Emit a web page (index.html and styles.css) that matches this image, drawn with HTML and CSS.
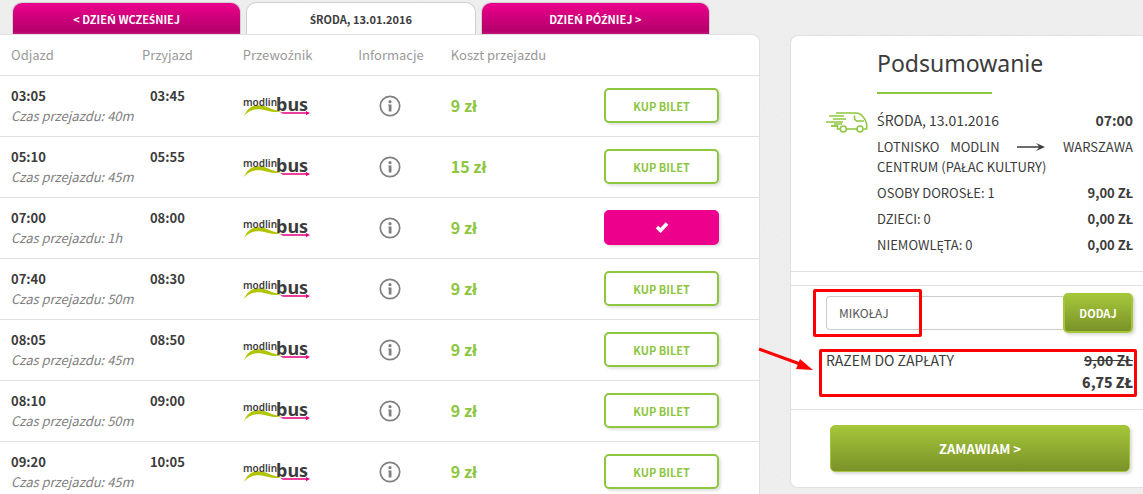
FILE: index.html
```html
<!doctype html>
<html lang="pl">
<head>
<meta charset="utf-8">
<title>ModlinBus - wybór kursu</title>
<link rel="stylesheet" href="styles.css">
</head>
<body>
<svg class="sprite" aria-hidden="true">
	<symbol id="logo" viewBox="0 0 68 24">
		<path d="M1 22C5 13 10 10.500 18 11.500C26 12.500 30 17 39 17C31 19.500 25 16.500 19 15.500C12 14.500 6 16 1 22Z" fill="#b0c400"/>
		<text x="0" y="12" class="logo-modlin">modlin</text>
		<text x="33" y="17" class="logo-bus">bus</text>
		<path d="M37 18.300H63V17L67 19L63 21.300V19.800H40Z" fill="#e5007d"/>
	</symbol>
	<symbol id="info" viewBox="0 0 22 22">
		<circle cx="11" cy="11" r="9.700" fill="none" stroke="#808080" stroke-width="1.700"/>
		<circle cx="11" cy="6.700" r="1.600" fill="#808080"/>
		<path d="M9.200 9.500H12.500V16.500H9.700V10.500H9.200Z" fill="#808080"/>
	</symbol>
</svg>
<div class="page">
	<div class="courses">
		<div class="tabs">
			<a href="#" class="tab">&lt; Dzie<span class="pl">ń</span> wcze<span class="pl">ś</span>niej</a>
			<a href="#" class="tab active"><span class="pl">Ś</span>roda, 13.01.2016</a>
			<a href="#" class="tab">Dzie<span class="pl">ń</span> pó<span class="pl">ź</span>niej &gt;</a>
		</div>
		<div class="sheet">
			<table class="list">
				<thead>
					<tr>
						<th class="from">Odjazd</th>
						<th class="to">Przyjazd</th>
						<th class="carrier">Przewo<span class="pl">ź</span>nik</th>
						<th class="info">Informacje</th>
						<th class="price">Koszt przejazdu</th>
						<th class="buy"></th>
					</tr>
				</thead>
				<tbody>
					<tr>
						<td class="from"><b>03:05</b><i>Czas przejazdu: 40m</i></td>
						<td class="to"><b>03:45</b></td>
						<td class="carrier"><svg class="logo" role="img" aria-label="modlinbus"><use href="#logo"/></svg></td>
						<td class="info"><svg class="info-icon" role="img" aria-label="Informacje"><use href="#info"/></svg></td>
						<td class="price">9 zł</td>
						<td class="buy"><button type="button" class="btn-buy">Kup bilet</button></td>
					</tr>
					<tr>
						<td class="from"><b>05:10</b><i>Czas przejazdu: 45m</i></td>
						<td class="to"><b>05:55</b></td>
						<td class="carrier"><svg class="logo" role="img" aria-label="modlinbus"><use href="#logo"/></svg></td>
						<td class="info"><svg class="info-icon" role="img" aria-label="Informacje"><use href="#info"/></svg></td>
						<td class="price">15 zł</td>
						<td class="buy"><button type="button" class="btn-buy">Kup bilet</button></td>
					</tr>
					<tr>
						<td class="from"><b>07:00</b><i>Czas przejazdu: 1h</i></td>
						<td class="to"><b>08:00</b></td>
						<td class="carrier"><svg class="logo" role="img" aria-label="modlinbus"><use href="#logo"/></svg></td>
						<td class="info"><svg class="info-icon" role="img" aria-label="Informacje"><use href="#info"/></svg></td>
						<td class="price">9 zł</td>
						<td class="buy"><button type="button" class="btn-buy selected" aria-label="Wybrany"><svg class="check" viewBox="0 0 14 12"><path d="M2 6L5.500 9.500L12 2.500" fill="none" stroke="#fff" stroke-width="3.600"/></svg></button></td>
					</tr>
					<tr>
						<td class="from"><b>07:40</b><i>Czas przejazdu: 50m</i></td>
						<td class="to"><b>08:30</b></td>
						<td class="carrier"><svg class="logo" role="img" aria-label="modlinbus"><use href="#logo"/></svg></td>
						<td class="info"><svg class="info-icon" role="img" aria-label="Informacje"><use href="#info"/></svg></td>
						<td class="price">9 zł</td>
						<td class="buy"><button type="button" class="btn-buy">Kup bilet</button></td>
					</tr>
					<tr>
						<td class="from"><b>08:05</b><i>Czas przejazdu: 45m</i></td>
						<td class="to"><b>08:50</b></td>
						<td class="carrier"><svg class="logo" role="img" aria-label="modlinbus"><use href="#logo"/></svg></td>
						<td class="info"><svg class="info-icon" role="img" aria-label="Informacje"><use href="#info"/></svg></td>
						<td class="price">9 zł</td>
						<td class="buy"><button type="button" class="btn-buy">Kup bilet</button></td>
					</tr>
					<tr>
						<td class="from"><b>08:10</b><i>Czas przejazdu: 50m</i></td>
						<td class="to"><b>09:00</b></td>
						<td class="carrier"><svg class="logo" role="img" aria-label="modlinbus"><use href="#logo"/></svg></td>
						<td class="info"><svg class="info-icon" role="img" aria-label="Informacje"><use href="#info"/></svg></td>
						<td class="price">9 zł</td>
						<td class="buy"><button type="button" class="btn-buy">Kup bilet</button></td>
					</tr>
					<tr>
						<td class="from"><b>09:20</b><i>Czas przejazdu: 45m</i></td>
						<td class="to"><b>10:05</b></td>
						<td class="carrier"><svg class="logo" role="img" aria-label="modlinbus"><use href="#logo"/></svg></td>
						<td class="info"><svg class="info-icon" role="img" aria-label="Informacje"><use href="#info"/></svg></td>
						<td class="price">9 zł</td>
						<td class="buy"><button type="button" class="btn-buy">Kup bilet</button></td>
					</tr>
				</tbody>
			</table>
		</div>
	</div>
	<div class="summary">
		<div class="trip">
			<svg class="van" viewBox="0 0 42 22" fill="none" stroke="#8dc63f" stroke-width="1.600">
				<path d="M10 2H30C35 2 38 6 40 11C41 13 41 15 40.500 18H37.500M31 18H20.500M14 18H11.500V15H5"/>
				<path d="M28.500 4.500V8L30.500 10H38"/>
				<path d="M3 5H18M7 8H20M0 11H17M5 15H12M8 13H16"/>
				<circle cx="17.300" cy="18" r="3"/>
				<circle cx="34" cy="18" r="3"/>
			</svg>
			<div class="trip-data">
				<h2>Podsumowanie</h2>
				<div class="row date"><span><span class="pl">Ś</span>roda, 13.01.2016</span><b>07:00</b></div>
				<p class="route">Lotnisko Modlin <svg class="arrow" viewBox="0 0 28 10"><path d="M0 4.300H22L19 1L28 5L19 9L22 5.700H0Z" fill="#3c3c3c"/></svg> Warszawa Centrum (Pałac Kultury)</p>
				<div class="row"><span>Osoby dorosłe: 1</span><b>9,00 zł</b></div>
				<div class="row"><span>Dzieci: 0</span><b>0,00 zł</b></div>
				<div class="row"><span>Niemowlęta: 0</span><b>0,00 zł</b></div>
			</div>
		</div>
		<div class="pay">
			<form class="code">
				<input type="text" value="MIKOŁAJ" aria-label="Kod rabatowy">
				<button type="button" class="btn-green">Dodaj</button>
				<span class="mark mark-code"></span>
			</form>
			<div class="total">
				<span>Razem do zapłaty</span>
				<div class="sum"><del>9,00 zł</del><b>6,75 zł</b></div>
				<span class="mark mark-total"></span>
				<svg class="pointer" viewBox="0 0 56 26"><path d="M1 3L42 18" stroke="#f00" stroke-width="3"/><path d="M42 13L55 24L38 23Z" fill="#f00"/></svg>
			</div>
		</div>
		<div class="order">
			<button type="button" class="btn-green">Zamawiam &gt;</button>
		</div>
	</div>
</div>
</body>
</html>
```
FILE: styles.css
```css
*{
	box-sizing: border-box;
}
body{
	margin: 0;
	background: #efefef url("data:image/svg+xml,%3Csvg xmlns='http://www.w3.org/2000/svg' width='120' height='120'%3E%3Cfilter id='n'%3E%3CfeTurbulence type='fractalNoise' baseFrequency='.5' numOctaves='2' stitchTiles='stitch'/%3E%3CfeColorMatrix type='saturate' values='0'/%3E%3C/filter%3E%3Crect width='120' height='120' filter='url(%23n)' opacity='.07'/%3E%3C/svg%3E");
	font-family: "Noto Sans CJK JP", "Open Sans", sans-serif;
	font-size: 13px;
	line-height: 20px;
	color: #3c3c3c;
}
.sprite{
	display: none;
}
.pl{
	font-family: "Open Sans", sans-serif;
}
.page{
	display: grid;
	grid-template-columns: 760fr 353fr;
	column-gap: 30px;
	align-items: start;
	height: 100vh;
	overflow: hidden;
}
.tabs{
	display: flex;
	gap: 5px;
	padding: 2px 50px 0 12px;
}
.tab{
	flex: 1;
	height: 32px;
	border: 1px solid #d0d0d0;
	border-bottom: 0;
	border-radius: 10px 10px 0 0;
	background: linear-gradient(#ec008c, #b4006b 90%, #c2187c);
	color: #fff;
	font-size: 11px;
	font-weight: bold;
	line-height: 32px;
	text-align: center;
	text-transform: uppercase;
	text-decoration: none;
}
.tab.active{
	background: #fff;
	color: #3c3c3c;
}
.sheet{
	border: 1px solid #e0e0e0;
	border-left: 0;
	border-radius: 0 8px 0 0;
	background: #fff;
}
.list{
	width: 100%;
	table-layout: fixed;
	border-collapse: collapse;
}
.list th, .list td{
	padding: 0;
	border-bottom: 1px solid #e0e0e0;
	text-align: left;
}
.list th{
	height: 40px;
	color: #999;
	font-weight: normal;
}
.list td{
	height: 61px;
}
.list .from{
	width: 18.700%;
	padding-left: 11px;
}
.list .to{
	width: 13.300%;
}
.list td.to{
	padding: 10px 0 0 8px;
	vertical-align: top;
}
.list .carrier{
	width: 15.200%;
}
.list .info{
	width: 12.200%;
}
.list td.info{
	padding-left: 21px;
}
.list .price{
	width: 20.200%;
}
.list td.price{
	padding-bottom: 2px;
	color: #8dc63f;
	font-size: 16px;
	font-weight: bold;
}
.from b, .from i{
	display: block;
}
.from i{
	color: #808080;
}
.logo{
	display: block;
	width: 68px;
	height: 24px;
}
.logo-modlin, .logo-bus{
	font-family: "Noto Sans", sans-serif;
	fill: #3c3c3c;
}
.logo-modlin{
	font-size: 10px;
	font-weight: 600;
}
.logo-bus{
	font-size: 18px;
	font-weight: bold;
}
.info-icon{
	display: block;
	width: 22px;
	height: 22px;
}
.btn-buy{
	display: block;
	width: 115px;
	height: 35px;
	padding: 0;
	border: 2px solid #8dc63f;
	border-radius: 5px;
	background: #fff;
	box-shadow: 2px 2px 3px rgba(0,0,0,.12);
	color: #8dc63f;
	font: bold 11px "Noto Sans CJK JP", "Open Sans", sans-serif;
	text-transform: uppercase;
}
.btn-buy.selected{
	border-color: #ec008c;
	background: #ec008c;
}
.check{
	width: 14px;
	height: 12px;
}
.summary{
	margin-top: 35px;
	border: 1px solid #e0e0e0;
	border-right: 0;
	border-radius: 8px 0 0 8px;
	background: #fff;
	text-transform: uppercase;
}
.trip{
	display: flex;
	gap: 9px;
	padding: 10px 10px 13px 35px;
	border-bottom: 1px solid #e0e0e0;
}
.van{
	flex: none;
	width: 42px;
	height: 22px;
	margin-top: 65px;
}
.trip-data{
	flex: 1;
}
.trip h2{
	margin: 0 0 15px;
	font-family: "Noto Sans", sans-serif;
	font-size: 23px;
	font-weight: normal;
	line-height: 34px;
	text-transform: none;
}
.trip h2::after{
	content: "";
	display: block;
	width: 115px;
	height: 2px;
	margin-top: 12px;
	background: #8dc63f;
}
.row{
	display: flex;
	justify-content: space-between;
	line-height: 26px;
}
.row.date{
	font-size: 14px;
	line-height: 22px;
}
.route{
	margin: 5px 0 3px;
	text-align: justify;
}
.arrow{
	width: 28px;
	height: 10px;
	margin: 0 7px;
}
.pay{
	margin-top: 13px;
	padding: 7px 10px 16px 35px;
	border-top: 1px solid #e0e0e0;
	border-bottom: 1px solid #e0e0e0;
}
.code{
	display: flex;
	align-items: center;
	position: relative;
}
.code input{
	flex: 1;
	min-width: 0;
	height: 34px;
	padding: 0 12px;
	border: 1px solid #ccc;
	border-right: 0;
	border-radius: 4px 0 0 4px;
	color: #555;
	font: 12px "Noto Sans CJK JP", "Open Sans", sans-serif;
}
.btn-green{
	border: 2px solid #a4c639;
	border-radius: 5px;
	background: linear-gradient(#a4c639, #7a9229);
	box-shadow: 2px 2px 3px rgba(0,0,0,.15);
	color: #fff;
	font: bold 13px "Noto Sans CJK JP", "Open Sans", sans-serif;
	text-transform: uppercase;
}
.code .btn-green{
	width: 70px;
	height: 40px;
	padding: 0;
	font-size: 11px;
}
.total{
	display: flex;
	justify-content: space-between;
	position: relative;
	margin-top: 16px;
	font-size: 14px;
	line-height: 22px;
}
.sum{
	font-weight: bold;
	text-align: right;
}
.sum del, .sum b{
	display: block;
}
.order{
	padding: 15px 13px 15px 39px;
}
.order .btn-green{
	width: 100%;
	height: 47px;
	border-width: 1px;
}
/* red marks over the form */
.mark{
	position: absolute;
	border: 3px solid #f00;
	border-radius: 2px;
}
.mark-code{
	left: -13px;
	top: -4px;
	width: 109px;
	height: 48px;
}
.mark-total{
	left: -7px;
	right: -4px;
	top: 0;
	height: 48px;
}
.pointer{
	position: absolute;
	left: -68px;
	top: -3px;
	width: 56px;
	height: 26px;
}
```
